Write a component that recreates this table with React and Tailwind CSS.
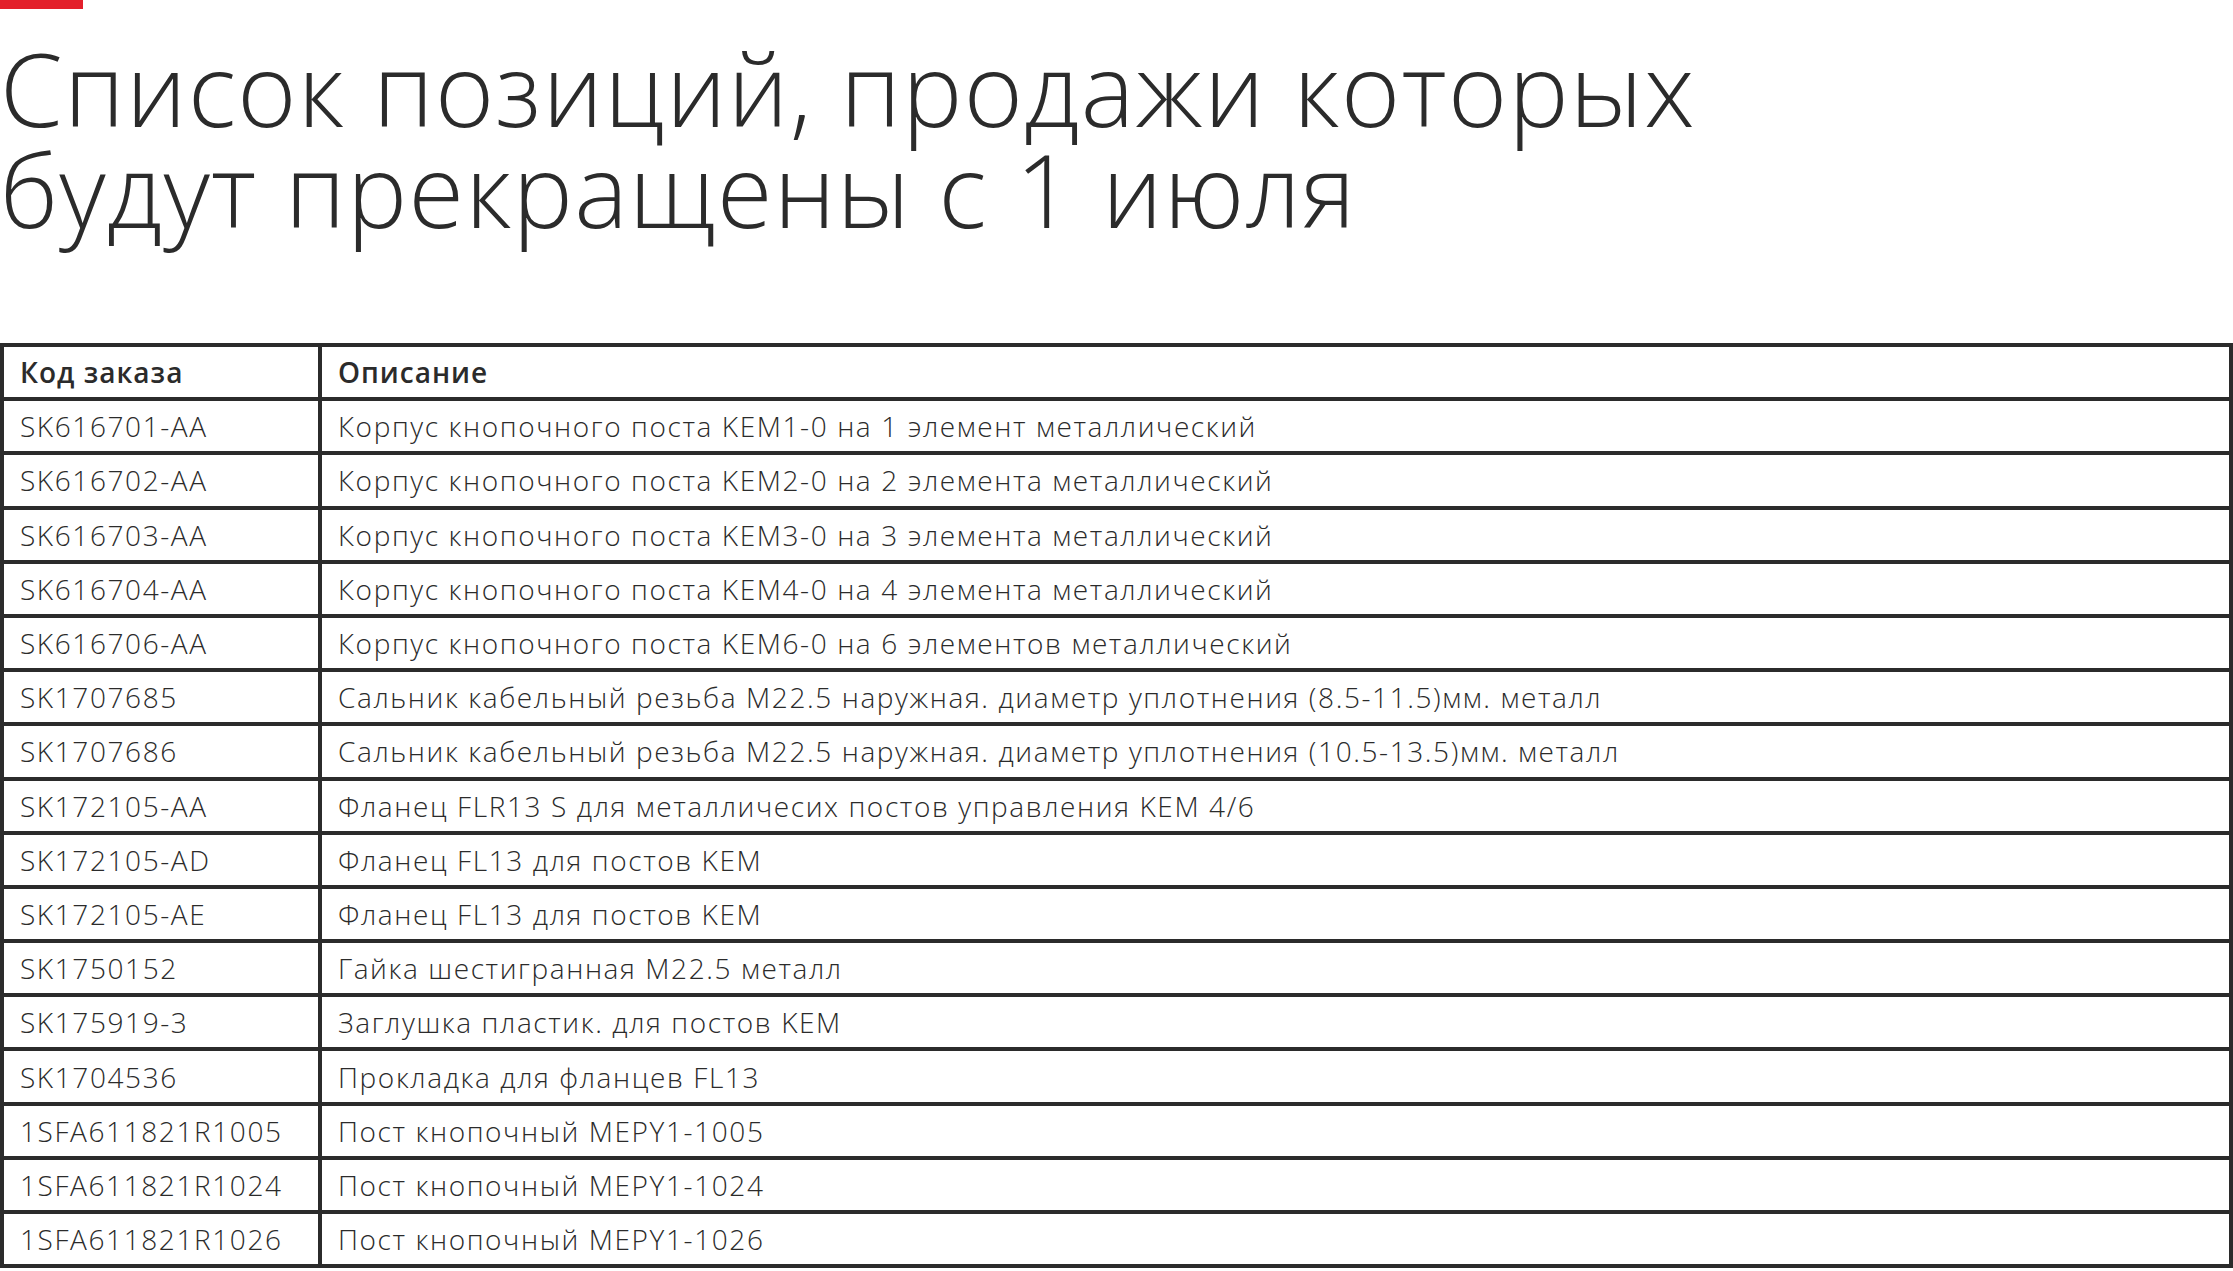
import React from 'react';

const rows = [
  ['SK616701-AA', 'Корпус кнопочного поста KEM1-0 на 1 элемент металлический'],
  ['SK616702-AA', 'Корпус кнопочного поста KEM2-0 на 2 элемента металлический'],
  ['SK616703-AA', 'Корпус кнопочного поста KEM3-0 на 3 элемента металлический'],
  ['SK616704-AA', 'Корпус кнопочного поста KEM4-0 на 4 элемента металлический'],
  ['SK616706-AA', 'Корпус кнопочного поста KEM6-0 на 6 элементов металлический'],
  ['SK1707685', 'Сальник кабельный резьба M22.5 наружная. диаметр уплотнения (8.5-11.5)мм. металл'],
  ['SK1707686', 'Сальник кабельный резьба M22.5 наружная. диаметр уплотнения (10.5-13.5)мм. металл'],
  ['SK172105-AA', 'Фланец FLR13 S для металличесих постов управления KEM 4/6'],
  ['SK172105-AD', 'Фланец FL13 для постов KEM'],
  ['SK172105-AE', 'Фланец FL13 для постов KEM'],
  ['SK1750152', 'Гайка шестигранная M22.5 металл'],
  ['SK175919-3', 'Заглушка пластик. для постов KEM'],
  ['SK1704536', 'Прокладка для фланцев FL13'],
  ['1SFA611821R1005', 'Пост кнопочный MEPY1-1005'],
  ['1SFA611821R1024', 'Пост кнопочный MEPY1-1024'],
  ['1SFA611821R1026', 'Пост кнопочный MEPY1-1026'],
];

const App = () => (
  <div className="min-h-screen bg-white text-[#2b2b2b] font-['Open_Sans',sans-serif]">
    <div className="h-[9px] w-[83px] bg-[#e3202b]" />
    <h1 className="mt-[29px] text-[101px] font-light leading-[101px] tracking-[1.3px]">
      Список позиций, продажи которых
      <br />
      будут прекращены с 1 июля
    </h1>
    <table className="mt-[103px] w-full border-collapse">
      <thead>
        <tr className="h-[54.2px]">
          <th className="w-[318px] border-4 border-[#2b2b2b] px-4 text-left text-[28px] font-semibold tracking-[1px]">Код заказа</th>
          <th className="border-4 border-[#2b2b2b] px-4 text-left text-[28px] font-semibold tracking-[1px]">Описание</th>
        </tr>
      </thead>
      <tbody>
        {rows.map(([code, desc]) => (
          <tr key={code} className="h-[54.2px]">
            <td className="border-4 border-[#2b2b2b] px-4 text-[28px] font-light tracking-[1.6px]">{code}</td>
            <td className="border-4 border-[#2b2b2b] px-4 text-[28px] font-light tracking-[1.6px]">{desc}</td>
          </tr>
        ))}
      </tbody>
    </table>
  </div>
);

export default App;
